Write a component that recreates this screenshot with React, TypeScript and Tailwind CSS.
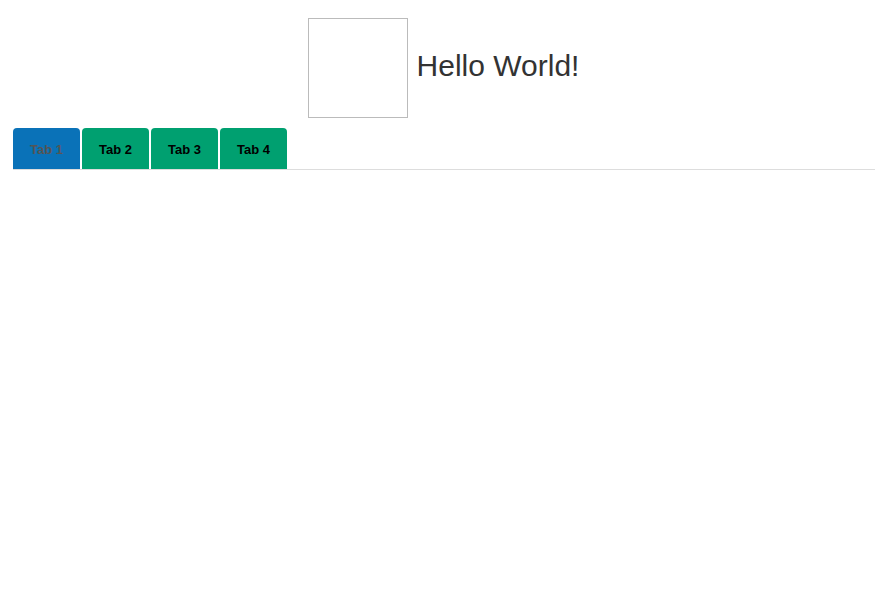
export default function App() {
  const tabs = ["Tab 1", "Tab 2", "Tab 3", "Tab 4"]
  return (
    <div className="w-[885px] h-[600px] bg-white font-['Liberation_Sans',Arial,sans-serif]">
      {/* header */}
      <div className="flex items-center justify-center gap-[9px] pt-[18px] pl-[2px]">
        <div className="w-[100px] h-[100px] border border-[#bbbbbb]" />
        <h1 className="text-[30px] leading-none text-[#333333] pb-[5px]">Hello World!</h1>
      </div>

      {/* tabs */}
      <div className="ml-[13px] mr-[10px] mt-[10px] flex gap-[2px] border-b border-[#dddddd]">
        {tabs.map((t, i) => (
          <div
            key={t}
            className={
              i === 0
                ? "h-[41px] pt-[2px] px-[17px] flex items-center rounded-t-[4px] bg-[#0a72b8] text-[13px] font-bold text-[#555555]"
                : "h-[41px] pt-[2px] px-[17px] flex items-center rounded-t-[4px] bg-[#00a070] text-[13px] font-bold text-black"
            }
          >
            {t}
          </div>
        ))}
      </div>
    </div>
  )
}
